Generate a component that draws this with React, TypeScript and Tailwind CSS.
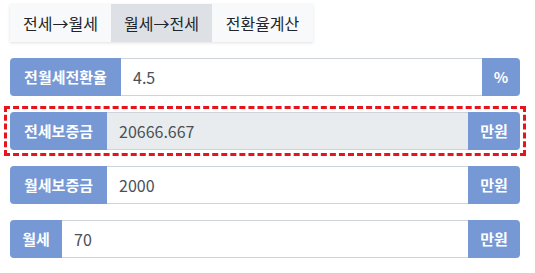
const font = { fontFamily: '"Noto Sans CJK KR", "Noto Sans", sans-serif' };

const tabs = [
  { label: "전세→월세", active: false },
  { label: "월세→전세", active: true },
  { label: "전환율계산", active: false },
];

type RowProps = {
  label: string;
  value: string;
  unit: string;
  labelW: string;
  unitW: string;
  readOnly?: boolean;
};

function Row({ label, value, unit, labelW, unitW, readOnly }: RowProps) {
  return (
    <div className="flex h-[38px] w-[510px]">
      <div
        className={`flex ${labelW} items-center justify-center rounded-l-[4px] bg-[#7698d4] text-[15px] font-bold text-white`}
      >
        {label}
      </div>
      <div
        className={`flex flex-1 items-center border-y border-[#ced4da] px-[12px] text-[16px] text-[#495057] ${
          readOnly ? "bg-[#e9ecef]" : "bg-white"
        }`}
      >
        {value}
      </div>
      <div
        className={`flex ${unitW} items-center justify-center rounded-r-[4px] bg-[#7698d4] text-[15px] font-bold text-white`}
      >
        {unit}
      </div>
    </div>
  );
}

export default function App() {
  return (
    <div className="h-[273px] w-[535px] bg-white pl-[10px] pt-[4px]" style={font}>
      <div className="flex w-fit bg-[#f8f9fa] shadow-[0_1px_3px_rgba(0,0,0,0.12)]">
        {tabs.map((t) => (
          <div
            key={t.label}
            className={`flex h-[38px] w-[101px] items-center justify-center text-[16px] text-[#212529] ${
              t.active ? "bg-[#dde1e6]" : ""
            }`}
          >
            {t.label}
          </div>
        ))}
      </div>
      <div className="mt-[16px] flex flex-col gap-[16px]">
        <Row label="전월세전환율" value="4.5" unit="%" labelW="w-[111px]" unitW="w-[38px]" />
        <div className="w-fit outline-[3px] outline-offset-[3px] outline-dashed outline-[#e8141c]">
          <Row label="전세보증금" value="20666.667" unit="만원" labelW="w-[97px]" unitW="w-[52px]" readOnly />
        </div>
        <Row label="월세보증금" value="2000" unit="만원" labelW="w-[97px]" unitW="w-[52px]" />
        <Row label="월세" value="70" unit="만원" labelW="w-[52px]" unitW="w-[52px]" />
      </div>
    </div>
  );
}
